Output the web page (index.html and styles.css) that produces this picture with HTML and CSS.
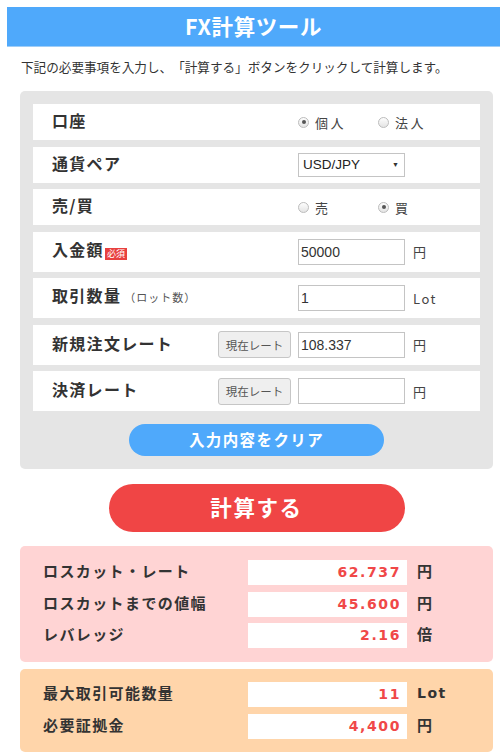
FILE: index.html
```html
<!DOCTYPE html>
<html lang="ja">
<head>
<meta charset="utf-8">
<title>FX計算ツール</title>
<link rel="stylesheet" href="styles.css">
</head>
<body>
<header class="head"><h1 class="title">FX計算ツール</h1></header>
<p class="intro">下記の必要事項を入力し、「計算する」ボタンをクリックして計算します。</p>
<main class="wrap">
  <section class="panel">
    <div class="row">
      <div class="label">口座</div>
      <div class="ctrl">
        <label class="opt"><span class="radio on"></span>個人</label>
        <label class="opt"><span class="radio"></span>法人</label>
      </div>
    </div>
    <div class="row">
      <div class="label">通貨ペア</div>
      <div class="ctrl">
        <div class="select"><span>USD/JPY</span><span class="arrow">▼</span></div>
      </div>
    </div>
    <div class="row">
      <div class="label">売/買</div>
      <div class="ctrl">
        <label class="opt"><span class="radio"></span>売</label>
        <label class="opt"><span class="radio on"></span>買</label>
      </div>
    </div>
    <div class="row tall">
      <div class="label">入金額<span class="badge">必須</span></div>
      <div class="ctrl">
        <input class="field" type="text" value="50000"><span class="unit">円</span>
      </div>
    </div>
    <div class="row tall">
      <div class="label">取引数量<span class="sub">（ロット数）</span></div>
      <div class="ctrl">
        <input class="field" type="text" value="1"><span class="unit">Lot</span>
      </div>
    </div>
    <div class="row tall">
      <div class="label">新規注文レート</div>
      <button class="now" type="button">現在レート</button>
      <div class="ctrl">
        <input class="field" type="text" value="108.337"><span class="unit">円</span>
      </div>
    </div>
    <div class="row tall">
      <div class="label">決済レート</div>
      <button class="now" type="button">現在レート</button>
      <div class="ctrl">
        <input class="field" type="text" value=""><span class="unit">円</span>
      </div>
    </div>
    <div class="clear-wrap"><button class="clear" type="button">入力内容をクリア</button></div>
  </section>
  <div class="calc-wrap"><button class="calc" type="button">計算する</button></div>
  <section class="res pink">
    <div class="rrow"><div class="rlabel">ロスカット・レート</div><div class="rval">62.737</div><div class="runit">円</div></div>
    <div class="rrow"><div class="rlabel">ロスカットまでの値幅</div><div class="rval">45.600</div><div class="runit">円</div></div>
    <div class="rrow"><div class="rlabel">レバレッジ</div><div class="rval">2.16</div><div class="runit">倍</div></div>
  </section>
  <section class="res orange">
    <div class="rrow"><div class="rlabel">最大取引可能数量</div><div class="rval">11</div><div class="runit lot">Lot</div></div>
    <div class="rrow"><div class="rlabel">必要証拠金</div><div class="rval">4,400</div><div class="runit">円</div></div>
  </section>
</main>
</body>
</html>
```

FILE: styles.css
```css
* { box-sizing: border-box; }
html, body { margin: 0; padding: 0; }
body {
  font-family: "Noto Sans CJK JP", "Noto Sans", sans-serif;
  color: #333;
  background: #fff;
  overflow: hidden;
  text-spacing-trim: space-all;
}
.head {
  margin: 7px 0 0 7px;
  height: 40px;
  background: #4fa9fb;
  border-bottom: 1px solid #9fcdf7;
}
.title {
  margin: 0;
  font-size: 21.5px;
  line-height: 38px;
  font-weight: 700;
  color: #fff;
  text-align: center;
  letter-spacing: 0.6px;
}
.intro {
  margin: 10px 0 0 21px;
  font-size: 12.6px;
  line-height: 20px;
  color: #333;
}
.wrap {
  width: 473px;
  margin: 14px 0 0 20px;
}
.panel {
  background: #e5e5e5;
  border-radius: 5px;
  padding: 13px 13px 13px;
  display: flex;
  flex-direction: column;
  gap: 6.5px;
}
.row {
  display: flex;
  align-items: center;
  height: 36px;
  background: #fff;
  padding-left: 19px;
}
.row.tall { height: 40px; }
.label {
  flex: 1;
  font-size: 16px;
  font-weight: 700;
  letter-spacing: 1.3px;
  line-height: 20px;
  padding-bottom: 4px;
  color: #333;
  white-space: nowrap;
}
.badge {
  display: inline-block;
  vertical-align: -1px;
  margin-left: 1px;
  height: 12px;
  padding: 0 2px;
  background: #e8403f;
  color: #fff;
  font-size: 9px;
  line-height: 12px;
  font-weight: 400;
  letter-spacing: 0;
}
.sub {
  font-size: 11px;
  font-weight: 400;
  color: #555;
  letter-spacing: 1px;
  margin-left: 3px;
}
.ctrl {
  width: 182px;
  display: flex;
  align-items: center;
}
.opt {
  width: 80px;
  display: flex;
  align-items: center;
  font-size: 13px;
  letter-spacing: 2.5px;
  color: #444;
}
.radio {
  width: 11px;
  height: 11px;
  border-radius: 50%;
  border: 1px solid #bcbcbc;
  background: linear-gradient(#fdfdfd, #e4e4e4);
  margin-right: 6px;
  position: relative;
}
.radio.on::after {
  content: "";
  position: absolute;
  left: 2.5px;
  top: 2.5px;
  width: 4px;
  height: 4px;
  border-radius: 50%;
  background: #555;
}
.select {
  width: 107px;
  height: 24px;
  border: 1px solid #c4c4c4;
  display: flex;
  align-items: center;
  justify-content: space-between;
  padding: 0 5px 0 4px;
  font-family: "Liberation Sans", Arial, sans-serif;
  font-size: 13.5px;
  color: #222;
}
.arrow { font-size: 7px; color: #333; }
.field {
  width: 107px;
  height: 26px;
  border: 1px solid #c4c4c4;
  padding: 0 2px;
  margin: 0;
  font-family: "Liberation Sans", Arial, sans-serif;
  font-size: 14px;
  color: #333;
  background: #fff;
  outline: none;
}
.unit {
  margin-left: 8px;
  font-size: 13px;
  letter-spacing: 1.5px;
  color: #444;
}
.now {
  width: 73px;
  height: 27px;
  margin: 0 7px 0 0;
  padding: 0;
  border: 1px solid #c6c6c6;
  border-radius: 3px;
  background: #efefef;
  font-family: "Noto Sans CJK JP", sans-serif;
  font-size: 11.5px;
  color: #555;
}
.clear-wrap {
  display: flex;
  justify-content: center;
  padding-top: 6.5px;
}
.clear {
  width: 255px;
  height: 32px;
  border: 0;
  border-radius: 16px;
  background: #4fa9fb;
  color: #fff;
  font-family: "Noto Sans CJK JP", sans-serif;
  font-size: 15.5px;
  font-weight: 700;
  letter-spacing: 1.4px;
  padding: 0 0 2px;
}
.calc-wrap {
  display: flex;
  justify-content: center;
  padding: 15px 0 14px;
}
.calc {
  width: 296px;
  height: 48px;
  border: 0;
  border-radius: 24px;
  background: #f04545;
  color: #fff;
  font-family: "Noto Sans CJK JP", sans-serif;
  font-size: 21.5px;
  font-weight: 700;
  letter-spacing: 1.6px;
  padding: 0 0 3px;
}
.res {
  border-radius: 5px;
  padding: 14px 0 14px 23px;
  display: flex;
  flex-direction: column;
  gap: 6.5px;
}
.pink { background: #ffd4d4; }
.orange {
  background: #ffd5aa;
  margin-top: 7px;
  padding: 13px 0 13px 23px;
  gap: 7px;
}
.rrow {
  display: grid;
  grid-template-columns: 195px 159px auto;
  column-gap: 10px;
  align-items: center;
  height: 25px;
}
.rlabel {
  font-size: 15px;
  font-weight: 700;
  letter-spacing: 1.4px;
  line-height: 20px;
  padding-bottom: 3px;
  color: #333;
  white-space: nowrap;
}
.rval {
  height: 25px;
  background: #fff;
  text-align: right;
  padding-right: 6px;
  font-family: "DejaVu Sans", Verdana, sans-serif;
  font-size: 14px;
  font-weight: 700;
  line-height: 25px;
  letter-spacing: 1.6px;
  color: #f04848;
}
.runit {
  font-size: 15px;
  font-weight: 700;
  line-height: 20px;
  padding-bottom: 3px;
  color: #333;
}
.runit.lot {
  font-family: "DejaVu Sans", Verdana, sans-serif;
  font-size: 14px;
  letter-spacing: 1.5px;
}
```
